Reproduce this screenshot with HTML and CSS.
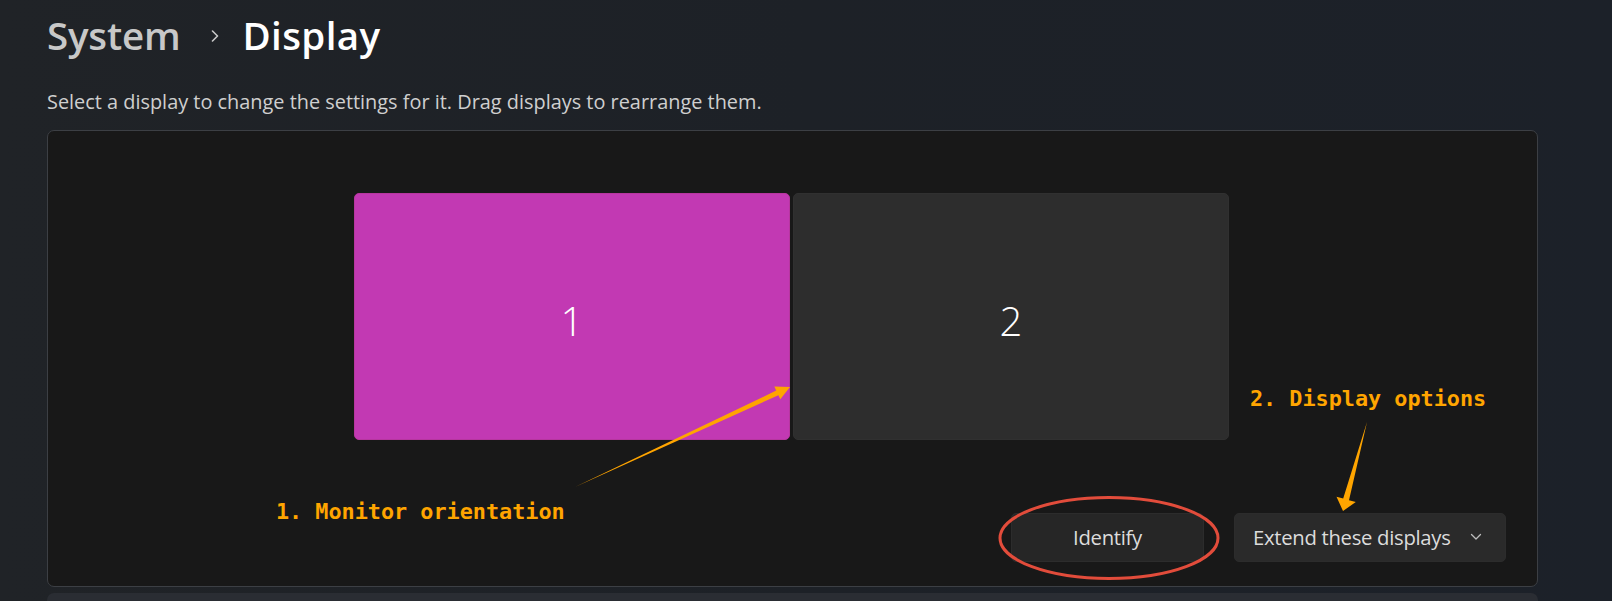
FILE: index.html
```html
<!DOCTYPE html>
<html lang="en">
<head>
<meta charset="utf-8">
<title>Display</title>
<link rel="stylesheet" href="styles.css">
</head>
<body>
<main class="page">
  <header class="crumb">
    <span class="crumb-parent">System</span>
    <svg class="crumb-sep" width="8" height="12" viewBox="0 0 8 12"><path d="M1.5 1 L6.5 6 L1.5 11" fill="none" stroke="#c9c9c9" stroke-width="1.6" stroke-linecap="round" stroke-linejoin="round"/></svg>
    <span class="crumb-current">Display</span>
  </header>
  <p class="hint">Select a display to change the settings for it. Drag displays to rearrange them.</p>
  <section class="panel">
    <div class="monitors">
      <div class="monitor monitor-active">1</div>
      <div class="monitor">2</div>
    </div>
    <div class="actions">
      <button class="btn btn-identify">Identify</button>
      <button class="btn btn-select"><span>Extend these displays</span>
        <svg width="12" height="8" viewBox="0 0 12 8"><path d="M1.5 1.5 L6 6 L10.5 1.5" fill="none" stroke="#bdbdbd" stroke-width="1.3" stroke-linecap="round" stroke-linejoin="round"/></svg>
      </button>
    </div>
  </section>
  <section class="panel-next"></section>
</main>
<div class="annotations">
  <svg class="anno-svg" width="1612" height="601" viewBox="0 0 1612 601">
    <polygon fill="#ffa500" points="575,487 776.2,390.6 774.3,386.5 790,387 780.3,399.3 778.4,395.2"/>
    <polygon fill="#ffa500" points="1367,422 1349,500.2 1355.8,502 1343,511 1336.5,496.8 1343.2,498.6"/>
    <ellipse cx="1109" cy="538" rx="109" ry="40.5" fill="none" stroke="#e24c3b" stroke-width="3"/>
  </svg>
  <span class="anno-label anno-1">1. Monitor orientation</span>
  <span class="anno-label anno-2">2. Display options</span>
</div>
</body>
</html>
```
FILE: styles.css
```css
html, body {
  margin: 0;
  padding: 0;
}
body {
  width: 1612px;
  height: 601px;
  overflow: hidden;
  position: relative;
  background: linear-gradient(90deg, #202327 0%, #1d2127 50%, #1c2129 100%);
  font-family: "Open Sans", "Noto Sans", sans-serif;
  color: #ffffff;
}
.page {
  padding: 11px 0 0 47px;
}
.crumb {
  display: flex;
  align-items: center;
  height: 48px;
  font-size: 38.5px;
  font-weight: 600;
  line-height: 48px;
  letter-spacing: -0.2px;
}
.crumb-parent {
  color: #c8c8c8;
}
.crumb-sep {
  margin: 0 23px 0 31px;
  position: relative;
  top: 1px;
}
.crumb-current {
  color: #ffffff;
  letter-spacing: 0.4px;
}
.hint {
  margin: 30px 0 15px;
  font-size: 19.9px;
  line-height: 26px;
  color: #cfcfcf;
}
.panel {
  box-sizing: border-box;
  width: 1491px;
  height: 457px;
  background: #181818;
  border: 1.5px solid #3c3f44;
  border-radius: 7px;
  padding: 62px 31px 0 0;
}
.monitors {
  display: flex;
  justify-content: center;
  gap: 3px;
  padding-left: 29px;
}
.monitor {
  width: 436px;
  height: 247px;
  border-radius: 5px;
  background: #2d2d2d;
  border: 1px solid #303030;
  box-sizing: border-box;
  display: flex;
  align-items: center;
  justify-content: center;
  font-size: 40px;
  font-weight: 300;
  color: #ffffff;
  padding-top: 8px;
}
.monitor-active {
  background: #c239b3;
  border-color: #b7369f;
}
.actions {
  display: flex;
  justify-content: flex-end;
  gap: 30px;
  margin-top: 73px;
}
.btn {
  box-sizing: border-box;
  height: 49px;
  border: 1px solid #2c2c2c;
  border-radius: 5px;
  background: #2a2a2a;
  color: #dcdcdc;
  font-family: "Open Sans", "Noto Sans", sans-serif;
  font-size: 20.3px;
  letter-spacing: -0.3px;
  display: flex;
  align-items: center;
  padding: 0 0 2px;
}
.btn-identify {
  width: 193px;
  justify-content: center;
  background: #262626;
}
.btn-select {
  width: 272px;
  justify-content: space-between;
  padding-left: 18px;
  padding-right: 23px;
}
.panel-next {
  margin-top: 6px;
  width: 1491px;
  height: 8px;
  background: #2a2d33;
  border-radius: 7px 7px 0 0;
}
.annotations {
  position: absolute;
  left: 0;
  top: 0;
  width: 1612px;
  height: 601px;
  pointer-events: none;
}
.anno-svg {
  position: absolute;
  left: 0;
  top: 0;
}
.anno-label {
  position: absolute;
  font-family: "DejaVu Sans Mono", "Liberation Mono", monospace;
  font-weight: 700;
  font-size: 21.8px;
  line-height: 22px;
  color: #ffa500;
  white-space: pre;
}
.anno-1 {
  left: 276px;
  top: 501px;
}
.anno-2 {
  left: 1250px;
  top: 388px;
}
```
